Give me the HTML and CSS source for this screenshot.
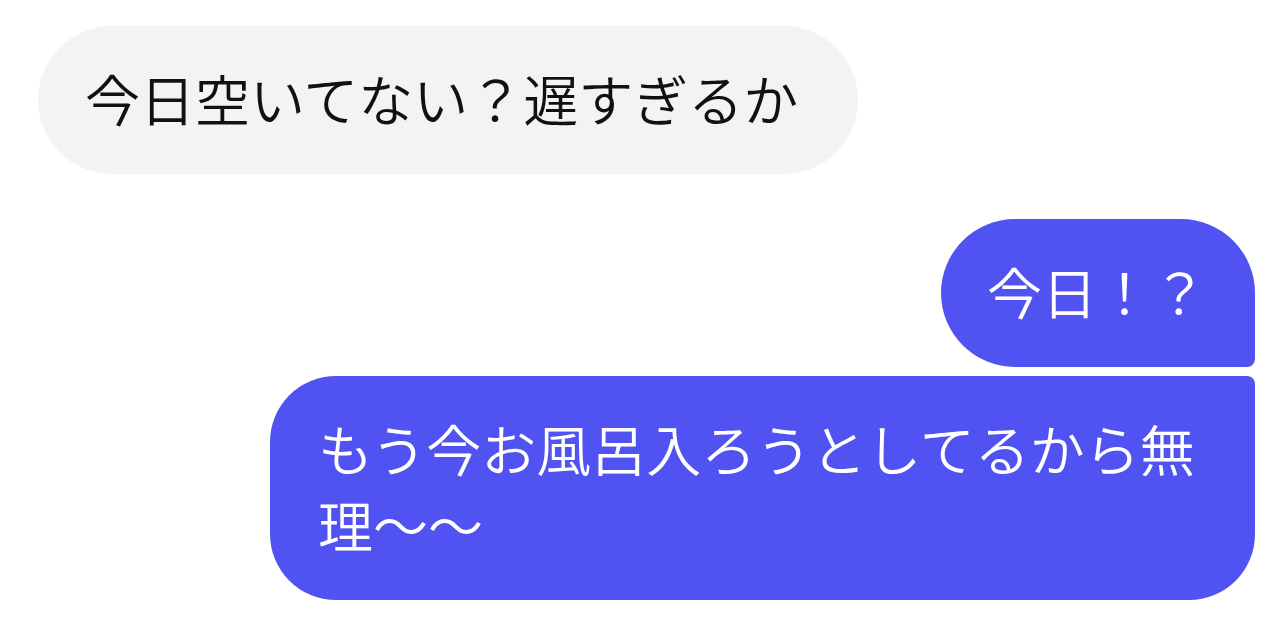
FILE: index.html
```html
<!DOCTYPE html>
<html lang="ja">
<head>
<meta charset="utf-8">
<link rel="stylesheet" href="styles.css">
</head>
<body>
<div class="chat">
  <div class="row in">
    <div class="bubble bubble-in">今日空いてない？遅すぎるか</div>
  </div>
  <div class="group out">
    <div class="bubble bubble-out first">今日！？</div>
    <div class="bubble bubble-out last">もう今お風呂入ろうとしてるから無理〜〜</div>
  </div>
</div>
</body>
</html>
```
FILE: styles.css
```css
html, body {
  margin: 0;
  padding: 0;
  background: #ffffff;
}
body {
  font-family: "Noto Sans CJK JP", "Noto Sans", sans-serif;
  width: 1285px;
  height: 628px;
  overflow: hidden;
}
.chat {
  display: flex;
  flex-direction: column;
  padding: 26px 30px 0 38px;
}
.row {
  display: flex;
}
.row.in {
  justify-content: flex-start;
}
.group {
  display: flex;
  flex-direction: column;
  align-items: flex-end;
  gap: 9px;
  margin-top: 45px;
}
.bubble {
  box-sizing: border-box;
  max-width: 985px;
  font-size: 55px;
  font-weight: 350;
  line-height: 76px;
  padding: 33px 48px 39px;
  border-radius: 74px;
  word-break: break-all;
}
.bubble-in {
  background: #f2f3f5;
  color: #111111;
  padding-left: 47px;
  padding-right: 60px;
}
.bubble-out {
  background: #5053f2;
  color: #ffffff;
}
.bubble-out.first {
  border-bottom-right-radius: 8px;
  padding-left: 46px;
}
.bubble-out.last {
  border-radius: 66px;
  border-top-right-radius: 8px;
}
```
